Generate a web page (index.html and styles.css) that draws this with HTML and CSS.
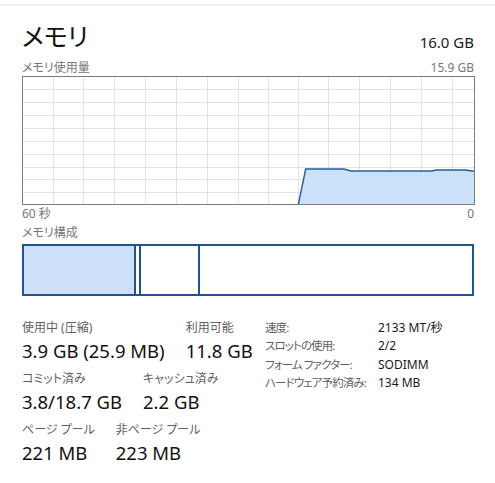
FILE: index.html
```html
<!DOCTYPE html>
<html lang="ja">
<head>
<meta charset="utf-8">
<title>メモリ</title>
<link rel="stylesheet" href="styles.css">
</head>
<body>
<div class="topline"></div>
<main class="panel">
  <header class="header">
    <h1 class="title">メモリ</h1>
    <div class="total">16.0 GB</div>
  </header>
  <div class="caption-row">
    <span>メモリ使用量</span>
    <span>15.9 GB</span>
  </div>
  <svg class="graph" width="453" height="129" viewBox="0 0 453 129">
    <g stroke="#e3e3e3" stroke-width="1">
      <line x1="31.5" y1="0" x2="31.5" y2="129"/>
      <line x1="61.5" y1="0" x2="61.5" y2="129"/>
      <line x1="92.5" y1="0" x2="92.5" y2="129"/>
      <line x1="123.5" y1="0" x2="123.5" y2="129"/>
      <line x1="154.5" y1="0" x2="154.5" y2="129"/>
      <line x1="185.5" y1="0" x2="185.5" y2="129"/>
      <line x1="216.5" y1="0" x2="216.5" y2="129"/>
      <line x1="246.5" y1="0" x2="246.5" y2="129"/>
      <line x1="276.5" y1="0" x2="276.5" y2="129"/>
      <line x1="306.5" y1="0" x2="306.5" y2="129"/>
      <line x1="337.5" y1="0" x2="337.5" y2="129"/>
      <line x1="368.5" y1="0" x2="368.5" y2="129"/>
      <line x1="399.5" y1="0" x2="399.5" y2="129"/>
      <line x1="430.5" y1="0" x2="430.5" y2="129"/>
      <line x1="0" y1="13.5" x2="453" y2="13.5"/>
      <line x1="0" y1="26.5" x2="453" y2="26.5"/>
      <line x1="0" y1="39.5" x2="453" y2="39.5"/>
      <line x1="0" y1="52.5" x2="453" y2="52.5"/>
      <line x1="0" y1="65.5" x2="453" y2="65.5"/>
      <line x1="0" y1="78.5" x2="453" y2="78.5"/>
      <line x1="0" y1="91.5" x2="453" y2="91.5"/>
      <line x1="0" y1="103.5" x2="453" y2="103.5"/>
      <line x1="0" y1="116.5" x2="453" y2="116.5"/>
    </g>
    <path d="M276.3 128.5 L283.7 93 L322 93 L329 95 L409.7 95 L414.7 94 L443 94 L452 95.3 L452 128.5 Z" fill="#cbe0f9"/>
    <path d="M276.3 128.5 L283.7 93 L322 93 L329 95 L409.7 95 L414.7 94 L443 94 L452 95.3" fill="none" stroke="#265d9b" stroke-width="1.4"/>
    <rect x="0.5" y="0.5" width="452" height="128" fill="none" stroke="#7d7d7d" stroke-width="1"/>
  </svg>
  <div class="caption-row">
    <span>60 秒</span>
    <span>0</span>
  </div>
  <div class="caption-row caption-gap">
    <span>メモリ構成</span>
  </div>
  <div class="composition">
    <div class="seg seg-inuse"></div>
    <div class="seg seg-modified"></div>
    <div class="seg seg-standby"></div>
    <div class="seg seg-free"></div>
  </div>
  <section class="stats">
    <div class="stats-main">
      <div class="stat-row">
        <div class="stat"><div class="stat-label">使用中 (圧縮)</div><div class="stat-value">3.9 GB (25.9 MB)</div></div>
        <div class="stat"><div class="stat-label">利用可能</div><div class="stat-value">11.8 GB</div></div>
      </div>
      <div class="stat-row">
        <div class="stat"><div class="stat-label">コミット済み</div><div class="stat-value">3.8/18.7 GB</div></div>
        <div class="stat"><div class="stat-label">キャッシュ済み</div><div class="stat-value">2.2 GB</div></div>
      </div>
      <div class="stat-row">
        <div class="stat"><div class="stat-label">ページ プール</div><div class="stat-value">221 MB</div></div>
        <div class="stat"><div class="stat-label">非ページ プール</div><div class="stat-value">223 MB</div></div>
      </div>
    </div>
    <dl class="details">
      <dt>速度:</dt><dd>2133 MT/秒</dd>
      <dt>スロットの使用:</dt><dd>2/2</dd>
      <dt>フォーム ファクター:</dt><dd>SODIMM</dd>
      <dt>ハードウェア予約済み:</dt><dd>134 MB</dd>
    </dl>
  </section>
</main>
</body>
</html>
```
FILE: styles.css
```css
* { box-sizing: border-box; }
html, body {
  margin: 0;
  padding: 0;
  background: #ffffff;
}
body {
  font-family: "Noto Sans", "Noto Sans CJK JP", sans-serif;
  font-feature-settings: "palt";
  color: #1a1a1a;
  width: 495px;
}
.topline {
  margin-top: 4px;
  height: 2px;
  background: #f0f0f0;
}
.panel {
  padding: 0 21px 0 22px;
  display: flex;
  flex-direction: column;
}
.header {
  display: flex;
  justify-content: space-between;
  align-items: flex-end;
  padding-top: 15px;
}
.title {
  margin: 0;
  font-size: 25px;
  line-height: 30px;
  font-weight: 400;
  color: #111;
}
.total {
  font-size: 15px;
  line-height: 18px;
  color: #1a1a1a;
}
.caption-row {
  display: flex;
  justify-content: space-between;
  font-size: 12px;
  line-height: 14px;
  color: #777;
  margin-top: 10px;
}
.graph {
  display: block;
  margin-top: 1px;
}
.graph + .caption-row {
  margin-top: 2px;
}
.caption-row.caption-gap {
  margin-top: 5px;
}
.composition {
  margin-top: 4px;
  height: 52px;
  display: flex;
  border: 2px solid #1f5493;
}
.seg {
  height: 100%;
  border-right: 2px solid #1f5493;
}
.seg-inuse {
  width: 112px;
  background: #cce0f9;
}
.seg-modified {
  width: 5px;
}
.seg-standby {
  width: 59px;
}
.seg-free {
  flex: 1;
  border-right: none;
}
.stats {
  display: flex;
  align-items: flex-start;
  margin-top: 23px;
}
.stats-main {
  width: 243px;
  display: flex;
  flex-direction: column;
  gap: 10px;
  padding-top: 2px;
}
.stat-row {
  display: flex;
  gap: 21px;
}
.stat-label {
  font-size: 12px;
  line-height: 14px;
  color: #5f5f5f;
  margin-bottom: 5px;
  white-space: nowrap;
}
.stat-value {
  font-size: 18.5px;
  line-height: 22px;
  color: #111;
  white-space: nowrap;
}
.details {
  margin: 0;
  display: grid;
  grid-template-columns: 113px auto;
  align-content: start;
  font-size: 12px;
  line-height: 18.3px;
}
.details dt {
  color: #5f5f5f;
  white-space: nowrap;
  font-size: 11.5px;
  letter-spacing: -0.9px;
}
.details dd {
  margin: 0;
  color: #1a1a1a;
  white-space: nowrap;
}
```
